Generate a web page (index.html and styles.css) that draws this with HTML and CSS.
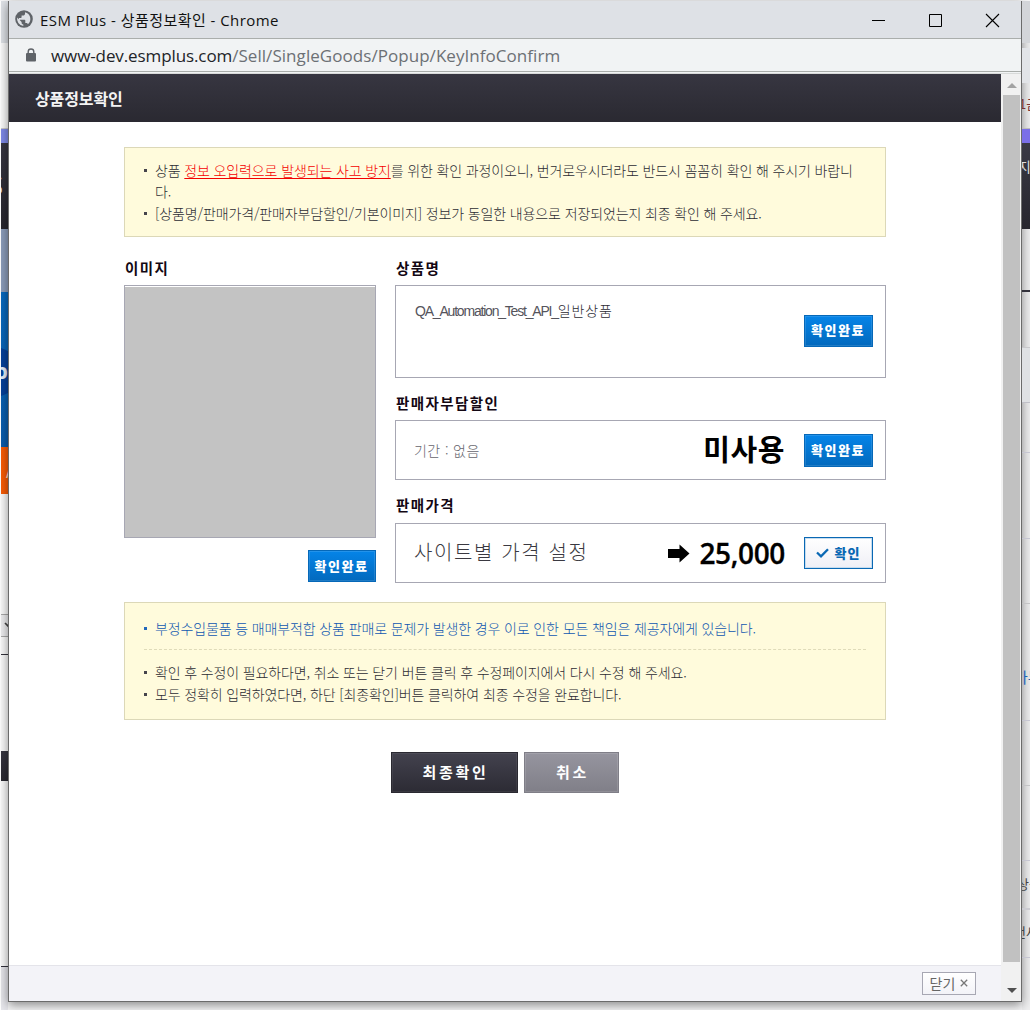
FILE: index.html
```html
<!DOCTYPE html>
<html lang="ko">
<head>
<meta charset="utf-8">
<title>ESM Plus - 상품정보확인</title>
<link rel="stylesheet" href="styles.css">
</head>
<body>
<div class="desktop">
  <div class="strip strip-left">
    <div class="seg l-tab"></div>
    <div class="seg l-bar"></div>
    <div class="seg l-violet"></div>
    <div class="seg l-dark"><span class="peek peek-s">S</span></div>
    <div class="seg l-slate"></div>
    <div class="seg l-blue"><i class="disc"></i><span class="peek peek-p">p</span></div>
    <div class="seg l-orange"><span class="peek peek-a">A</span></div>
    <div class="seg l-gap"></div>
    <div class="seg l-select"><svg width="7" height="8" viewBox="0 0 7 8"><path d="M3 1l5 5" stroke="#444" stroke-width="1.6"/></svg></div>
    <div class="seg l-row"></div>
    <div class="seg l-panel"></div>
    <div class="seg l-button"></div>
    <div class="seg l-rest"></div>
    <div class="seg l-foot"></div>
  </div>

  <div class="window">
    <div class="titlebar">
      <svg class="globe" width="18" height="18" viewBox="0 0 18 18"><circle cx="9" cy="9" r="8.8" fill="#5f6368"/><path d="M10 2.2v1.6c0 1-.8 1.8-1.8 1.8H6.600v1.500c0 .6-.4 1-1 1H4V9.800h5.300c.6 0 1 .4 1 1v2.200h.9c.8 0 1.500.5 1.700 1.300A7 7 0 0 0 10 2.200zM8.300 16v-1.500c-1 0-1.700-.8-1.700-1.700v-.9L2.200 7.500A7 7 0 0 0 8.300 16z" fill="#dee1e6"/></svg>
      <span class="title">ESM Plus - 상품정보확인 - Chrome</span>
      <svg class="controls" width="130" height="16" viewBox="0 0 130 16" fill="none" stroke="#000"><path d="M0 8.500h13"/><path d="M57.500 2.500h12v12h-12z"/><path d="M114 2l13 13M127 2l-13 13" stroke-width="1.100"/></svg>
    </div>
    <div class="addressbar">
      <svg class="lock" width="10" height="14" viewBox="0 0 10 14"><path d="M2.200 6V3.800a2.800 2.800 0 0 1 5.600 0V6" fill="none" stroke="#5f6368" stroke-width="1.400"/><rect y="5" width="10" height="8.500" rx="1" fill="#5f6368"/></svg>
      <span class="url"><span class="host">www-dev.esmplus.com</span><span class="path">/Sell/SingleGoods/Popup/KeyInfoConfirm</span></span>
    </div>
    <div class="viewport">
      <div class="page">
        <header class="page-head"><h1>상품정보확인</h1></header>
        <main class="content">
          <ul class="notice notice-top">
            <li>상품 <em>정보 오입력으로 발생되는 사고 방지</em>를 위한 확인 과정이오니, 번거로우시더라도 반드시 꼼꼼히 확인 해 주시기 바랍니<br>다.</li>
            <li>[상품명/판매가격/판매자부담할인/기본이미지] 정보가 동일한 내용으로 저장되었는지 최종 확인 해 주세요.</li>
          </ul>
          <div class="columns">
            <section class="col-image">
              <h2>이미지</h2>
              <div class="thumb"></div>
              <button class="btn btn-done">확인완료</button>
            </section>
            <section class="col-info">
              <h2>상품명</h2>
              <div class="box box-name">
                <p class="name"><span class="latin">QA_Automation_Test_API_</span>일반상품</p>
                <button class="btn btn-done">확인완료</button>
              </div>
              <h2>판매자부담할인</h2>
              <div class="box box-discount">
                <p class="period">기간 : 없음</p>
                <strong class="unused">미사용</strong>
                <button class="btn btn-done btn-tall">확인완료</button>
              </div>
              <h2>판매가격</h2>
              <div class="box box-price">
                <p class="site">사이트별 가격 설정</p>
                <svg class="arrow" width="22" height="19" viewBox="0 0 22 19"><path d="M0 5h11.500V0.500L21.500 9.500l-10 9V14H0z"/></svg>
                <strong class="price">25,000</strong>
                <button class="btn btn-check"><svg width="13" height="10" viewBox="0 0 13 10"><path d="M1 4.500L5 8.300L12 1.300" fill="none" stroke="#0a68b4" stroke-width="2.300"/></svg><span>확인</span></button>
              </div>
            </section>
          </div>
          <div class="notice notice-bottom">
            <ul class="legal"><li>부정수입물품 등 매매부적합 상품 판매로 문제가 발생한 경우 이로 인한 모든 책임은 제공자에게 있습니다.</li></ul>
            <ul>
              <li>확인 후 수정이 필요하다면, 취소 또는 닫기 버튼 클릭 후 수정페이지에서 다시 수정 해 주세요.</li>
              <li>모두 정확히 입력하였다면, 하단 [최종확인]버튼 클릭하여 최종 수정을 완료합니다.</li>
            </ul>
          </div>
          <div class="actions">
            <button class="action action-ok">최종확인</button>
            <button class="action action-cancel">취소</button>
          </div>
        </main>
        <footer class="page-foot"><button class="close">닫기 <svg width="8" height="8" viewBox="0 0 8 8"><path d="M.8 .8l6.400 6.400M7.200 .8L.8 7.200" stroke="#777" stroke-width="1.300"/></svg></button></footer>
      </div>
      <div class="scrollbar">
        <svg class="sb-up" width="10" height="5" viewBox="0 0 10 5"><path d="M5 0l5 5H0z" fill="#a3a3a3"/></svg>
        <div class="sb-thumb"></div>
        <svg class="sb-down" width="10" height="5" viewBox="0 0 10 5"><path d="M0 0h10L5 5z" fill="#505050"/></svg>
      </div>
    </div>
  </div>

  <div class="strip strip-right">
    <div class="seg r-tab"></div>
    <div class="seg r-line"></div>
    <div class="seg r-tool"></div>
    <div class="seg r-top"><span class="peek peek-1">1금</span></div>
    <div class="seg r-violet"></div>
    <div class="seg r-dark"><span class="peek peek-ji">지</span></div>
    <div class="seg r-a"></div>
    <div class="seg r-b"></div>
    <div class="seg r-c"></div>
    <div class="seg r-d"></div>
    <div class="seg r-e"></div>
    <div class="seg r-f"></div>
    <div class="seg r-g"><span class="peek peek-blue">가무</span></div>
    <div class="seg r-h"></div>
    <div class="seg r-i"></div>
    <div class="seg r-j"><span class="peek peek-sang">상품</span></div>
    <div class="seg r-k"><span class="peek peek-gun">전세</span></div>
    <div class="seg r-l"></div>
  </div>
</div>
</body>
</html>
```
FILE: styles.css
```css
* { box-sizing: border-box; }
body, h1, h2, p, ul { margin: 0; padding: 0; }
ul { list-style: none; }
body { background: #fff; font-family: "Noto Sans CJK KR", sans-serif; }
button { font-family: inherit; padding: 0; margin: 0; border-radius: 0; }

.desktop {
  display: grid;
  grid-template-columns: 8px 1014px 8px;
  width: 1030px;
  height: 1010px;
  padding-top: 1px;
  overflow: hidden;
  background: #f6f6f7;
}

/* slices of the page behind the popup */
.strip { display: flex; flex-direction: column; overflow: hidden; height: 1009px; }
.strip-left { border-left: 1px solid #fff; background: #fbfbfb; }
.strip-right { background: #efeff0; }
.seg { position: relative; flex: none; }
.peek { position: absolute; line-height: 1; white-space: nowrap; }
.l-tab { height: 42px; background: #dee1e6; }
.l-bar { height: 86px; border-bottom: 1px solid #ccc; }
.l-violet { height: 14px; background: #7f8ae8; }
.l-dark { height: 86px; background: linear-gradient(#373641, #27262e); }
.l-slate { height: 63px; background: #8c9dba; }
.l-blue { height: 155px; background: linear-gradient(#0869be, #0a5cab); overflow: hidden; }
.l-orange { height: 47px; background: #f95c05; overflow: hidden; }
.l-gap { height: 120px; }
.l-select { height: 23px; border: solid #aaa; border-width: 1px 0; background: #eeeef0; }
.l-select svg { position: absolute; left: 1px; top: 7px; }
.l-row { height: 18px; border-bottom: 1px solid #33323c; }
.l-panel { height: 96px; }
.l-button { height: 30px; background: linear-gradient(#373641, #2a2931); }
.l-rest { height: 186px; border-bottom: 1px solid #33323c; }
.l-foot { height: 43px; background: #e6e6eb; }
.disc { position: absolute; left: -32px; top: 55px; width: 50px; height: 50px; border-radius: 50%; background: #06419a; }
.peek-s { right: 5px; top: 29px; color: #eee; font: 26px/1 "Open Sans", sans-serif; }
.peek-p { left: -7px; top: 67px; color: #e8f0fa; font: bold 22px/1 "Open Sans", sans-serif; }
.peek-a { left: 5px; top: 18px; color: #ffe3d0; font-size: 14px; }

.r-tab { height: 42px; background: #d3d5d9; }
.r-line { height: 5px; }
.r-tool { height: 35px; background: #e2e4e8; }
.r-top { height: 46px; border-bottom: 1px solid #bbb; }
.r-violet { height: 14px; background: #7b6fe8; }
.r-dark { height: 86px; background: linear-gradient(#3a3945, #27262e); }
.r-a { height: 63px; border-bottom: 2px solid #33323c; }
.r-b { height: 56px; border-bottom: 1px solid #c9c9cc; }
.r-c { height: 55px; background: #dfe1e4; border-bottom: 1px solid #c0c0c8; }
.r-d { height: 50px; border-bottom: 1px solid #c6c6d2; }
.r-e { height: 86px; border-bottom: 1px solid #c6c6d2; }
.r-f { height: 65px; border-bottom: 1px solid #c4c4c6; }
.r-g { height: 117px; border-bottom: 1px solid #c6c6d2; }
.r-h { height: 65px; border-bottom: 1px solid #c4c4c6; }
.r-i { height: 75px; border-bottom: 1px solid #c6c6d2; }
.r-j { height: 49px; border-bottom: 2px solid #ccccd2; }
.r-k { height: 48px; border-bottom: 1px solid #c6c6d2; }
.r-l { height: 52px; }
.peek-1 { left: -3px; top: 14px; color: #7d3030; font-size: 13px; }
.peek-ji { left: -4px; top: 16px; color: #ddd; font-size: 14px; }
.peek-blue { left: -8px; top: 65px; color: #1c63b7; font-size: 15px; }
.peek-sang { left: -5px; top: 16px; color: #444; font-size: 13px; }
.peek-gun { left: -8px; top: 15px; color: #444; font-size: 13px; }

/* popup window */
.window {
  position: relative;
  display: flex;
  flex-direction: column;
  height: 1001px;
  border: solid #6b6b6b;
  border-width: 0 1px 1px;
  background: #fff;
  box-shadow: 0 3px 10px rgba(0, 0, 0, .45);
}
.titlebar { display: flex; align-items: center; height: 38px; padding: 0 19px 0 6px; background: #dee1e6; border-bottom: 1px solid #aaaeac; }
.globe { margin-bottom: 2px; }
.title { margin-left: 7px; font: 15px/20px "Open Sans", "Noto Sans CJK KR", sans-serif; color: #111; letter-spacing: .45px; white-space: nowrap; }
.controls { margin-left: auto; }
.addressbar { display: flex; align-items: center; height: 35px; padding: 0 0 2px 17px; background: #f1f3f4; border-bottom: 1px solid #d8dad9; box-shadow: inset 0 -1px #f1f3f4, inset 0 -2px #a9adaa; }
.url { margin: 2px 0 0 15px; font: 17px/24px "Open Sans", sans-serif; color: #6c7075; white-space: nowrap; }
.host { color: #222428; letter-spacing: -.1px; }
.path { letter-spacing: .05px; }
.viewport { display: flex; flex: 1; }
.page { display: flex; flex-direction: column; width: 992px; }
.scrollbar { position: relative; display: flex; flex-direction: column; align-items: center; width: 20px; padding: 9px 1px 8px 2px; background: #f1f1f1; }
.sb-thumb { width: 17px; height: 867px; margin-top: 7px; background: #c1c1c1; }
.sb-down { margin-top: auto; }

.page-head { height: 48px; padding-left: 26px; background: linear-gradient(#373641, #2a2931); }
.page-head h1 { font-size: 16px; line-height: 49px; letter-spacing: -.1px; font-weight: 700; color: #f4f4f4; }
.content { flex: 1; width: 762px; margin-left: 115px; padding-top: 25px; }

.notice { border: 1px solid #dcd8b8; background: #fffbdc; font-size: 14px; font-weight: 300; line-height: 21px; letter-spacing: -.13px; color: #2c2b33; }
.notice-top { height: 90px; padding: 12px 19px; }
.notice li { position: relative; padding-left: 11px; margin-bottom: 1px; white-space: nowrap; }
.notice li::before { content: ""; position: absolute; left: 0; top: 9px; width: 3px; height: 3px; background: #45444c; }
.notice .legal li::before { background: #2268bb; }
.notice em { font-style: normal; color: #f40000; text-decoration: underline; text-underline-offset: 2px; }
.notice-bottom { height: 118px; margin-top: 19px; padding: 15px 19px; }
.legal { height: 32px; margin-bottom: 12px; border-bottom: 1px dashed #dfdbb9; color: #0f57b0; }

.columns { display: grid; grid-template-columns: 252px 491px; gap: 19px; margin-top: 20px; }
h2 { padding-left: 1px; font-size: 14.500px; line-height: 21px; letter-spacing: 1.400px; font-weight: 700; color: #130713; }
.page-head h1 { padding-left: 0; }
.col-image, .col-info { display: flex; flex-direction: column; }
.thumb { height: 253px; margin-top: 7px; border: 1px solid #a7a7b3; background: #c3c3c3; box-shadow: inset 0 1px #fff; }
.col-image .btn { width: 68px; margin: 12px 0 0 184px; }
.box { display: flex; align-items: center; border: 1px solid #a7a7b3; padding: 0 12px 0 19px; }
.box-name { height: 93px; margin: 7px 0 14px; }
.box-name .btn { margin-bottom: 2px; }
.box-discount { height: 60px; margin: 7px 0 14px; }
.box-price { height: 60px; margin-top: 8px; }
.box p { flex: 1; color: #2c2b33; font-weight: 300; white-space: nowrap; }
.box .name { font-size: 14px; line-height: 20px; letter-spacing: .8px; margin-bottom: 42px; }
.latin { font-family: "Liberation Sans", sans-serif; letter-spacing: -1.200px; color: #55545c; }
.box .period { font-size: 14px; letter-spacing: .4px; color: #66656d; margin-left: -1px; }
.box .site { font-size: 20px; letter-spacing: 1.600px; padding-bottom: 4px; margin-left: -1px; color: #3a3941; }
.unused { font-size: 29px; line-height: 40px; letter-spacing: .6px; margin-right: 19px; padding-bottom: 5px; }
.price { margin: 0 19px 0 9px; font: 600 28px/40px "Open Sans", sans-serif; letter-spacing: -.35px; -webkit-text-stroke: .3px #000; }

.btn { flex: none; width: 69px; height: 32px; font-size: 13px; font-weight: 900; line-height: 27px; padding: 0 1px 2px 0; }
.btn-tall { height: 33px; }
.btn-done { border: 1px solid #0668b8; background: linear-gradient(#0584e8, #0269bd); box-shadow: inset 0 0 0 1px rgba(255, 255, 255, .12); color: #fff; letter-spacing: 1.500px; }
.btn-check { display: flex; align-items: center; justify-content: center; gap: 6px; border: 1px solid #0a68b4; background: linear-gradient(#fff, #efeff6); box-shadow: inset 0 0 0 1px #c6dcee; color: #0a68b4; letter-spacing: 1px; }
.btn-check svg { margin-top: 2px; }

.actions { display: flex; justify-content: center; gap: 6px; margin-top: 32px; }
.action { height: 41px; padding: 0 0 2px 2px; font-size: 15px; font-weight: 700; letter-spacing: 2.700px; color: #fff; }
.action-ok { width: 127px; border: 1px solid #2a2931; background: linear-gradient(#43424e, #2c2b34); box-shadow: inset 0 0 0 1px rgba(255, 255, 255, .06); }
.action-cancel { width: 95px; border: 1px solid #7f7e87; background: linear-gradient(#96959f, #807f88); box-shadow: inset 0 0 0 1px rgba(255, 255, 255, .12); }

.page-foot { display: flex; justify-content: flex-end; height: 36px; padding: 6px 25px 0 0; border-top: 1px solid #e4e4ea; background: #f3f3f8; }
.close { display: flex; align-items: center; justify-content: center; gap: 5px; width: 54px; height: 23px; padding-bottom: 1px; border: 1px solid #a7a7b3; background: linear-gradient(#fff, #f3f3f8); font-size: 14px; line-height: 20px; color: #666; }
```
